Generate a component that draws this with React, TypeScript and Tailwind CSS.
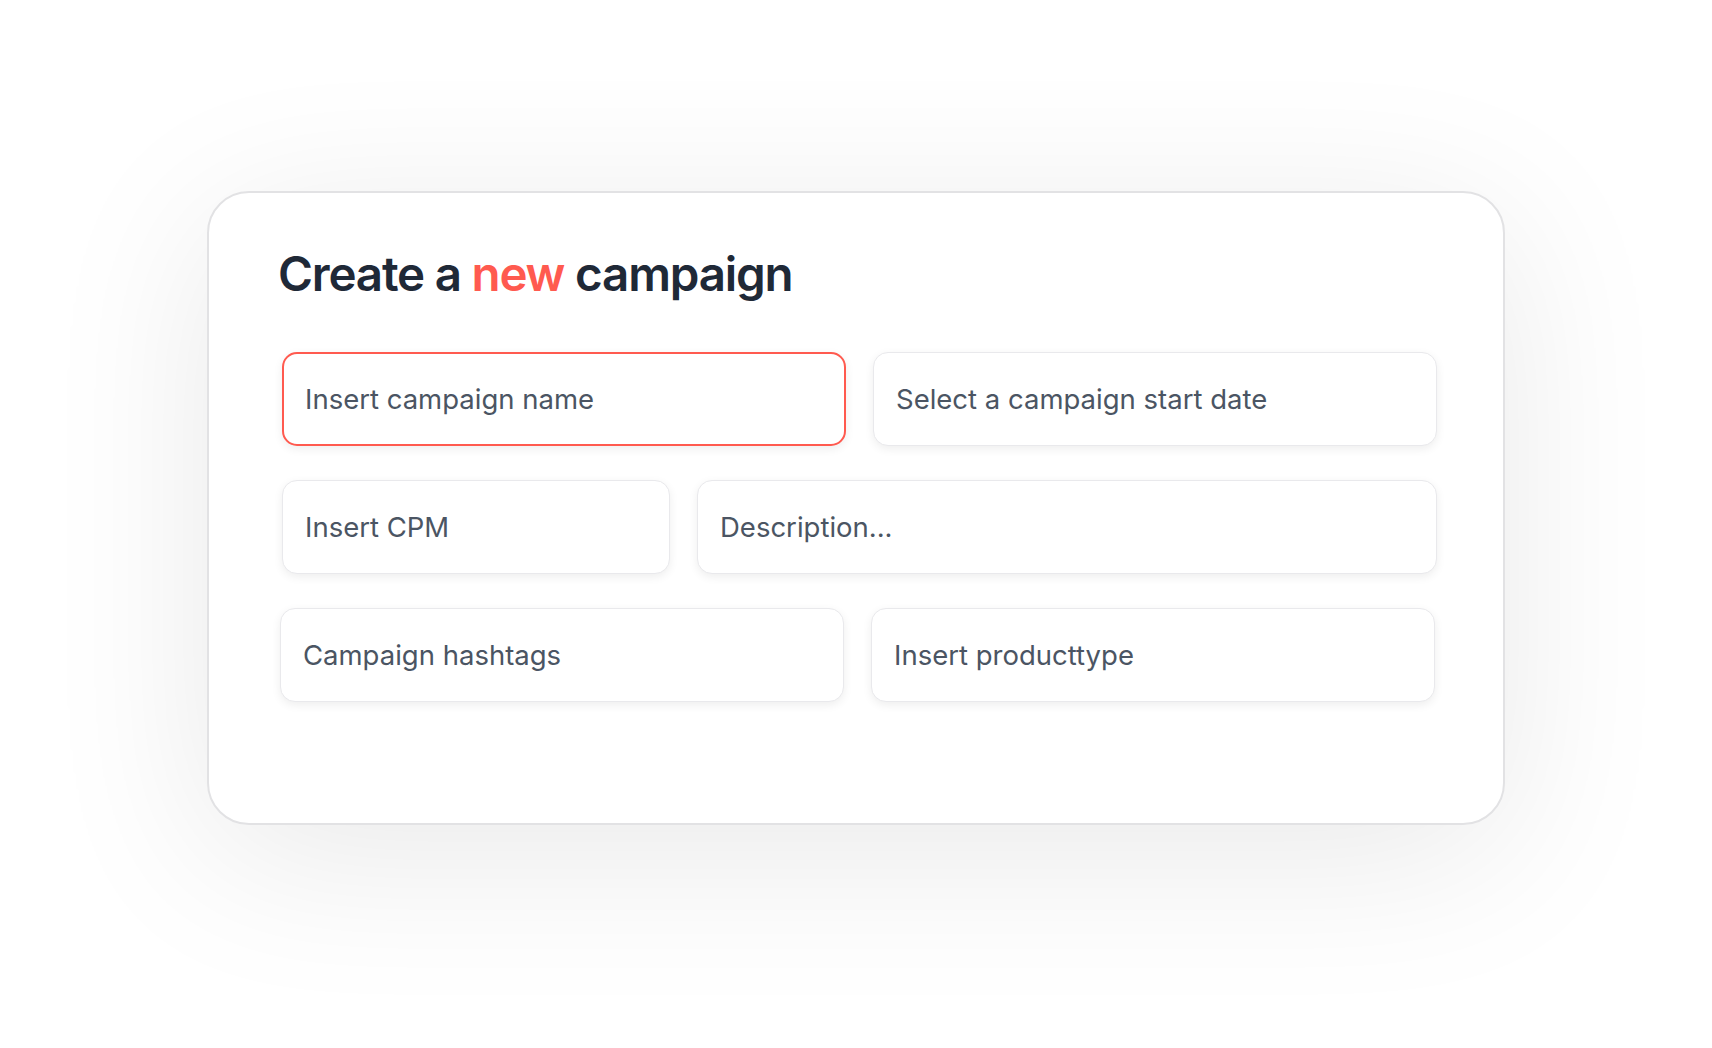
import React from "react";

interface FieldProps {
  placeholder: string;
  active?: boolean;
}

const Field: React.FC<FieldProps> = ({ placeholder, active }) => {
  return (
    <div
      className={
        active
          ? "flex h-[94px] items-center rounded-[15px] border-2 border-[#ff5a4f] bg-white pl-[21px] shadow-[0_3px_10px_rgba(0,0,0,0.07)]"
          : "flex h-[94px] items-center rounded-[15px] border border-[#e9e9ec] bg-white pl-[22px] shadow-[0_3px_10px_rgba(0,0,0,0.07)]"
      }
    >
      <span className="pt-[3px] text-[27.5px] leading-none text-[#4b5563]">{placeholder}</span>
    </div>
  );
};

const App: React.FC = () => {
  return (
    <div className="flex min-h-screen justify-center bg-white pt-[191px] font-['Inter',sans-serif]">
      <div className="box-border h-[634px] w-[1298px] rounded-[42px] border-2 border-[#e2e2e4] bg-white pt-[57px] shadow-[0_30px_170px_rgba(0,0,0,0.09)]">
        <h1 className="pl-[69px] text-[47.5px] leading-none font-semibold tracking-tight text-[#1f2937]">
          Create a <span className="text-[#ff5a4f]">new</span> campaign
        </h1>
        <div className="mt-[54px] flex flex-col gap-[34px] pr-[66px] pl-[73px]">
          <div className="grid grid-cols-2 gap-[27px]">
            <Field placeholder="Insert campaign name" active />
            <Field placeholder="Select a campaign start date" />
          </div>
          <div className="grid grid-cols-[388px_1fr] gap-[27px]">
            <Field placeholder="Insert CPM" />
            <Field placeholder="Description..." />
          </div>
          <div className="-ml-[2px] mr-[2px] grid grid-cols-2 gap-[27px]">
            <Field placeholder="Campaign hashtags" />
            <Field placeholder="Insert producttype" />
          </div>
        </div>
      </div>
    </div>
  );
};

export default App;
